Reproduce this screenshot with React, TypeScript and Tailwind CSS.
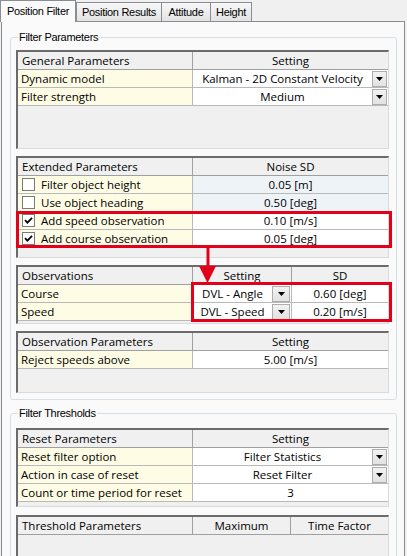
import React from 'react';

const lbl = "font-['Liberation_Sans',Arial,sans-serif] text-[11px] tracking-[-0.3px]";

function DropBtn({ wide }: { wide?: boolean }) {
  return (
    <div
      className={`mr-[1px] flex h-[16px] shrink-0 items-center justify-center border border-[#adadad] bg-gradient-to-b from-[#f2f2f2] to-[#e2e2e2] ${
        wide ? 'w-[18px]' : 'w-[15px]'
      }`}
    >
      <svg width="7" height="4" viewBox="0 0 7 4">
        <path d="M0 0h7L3.5 4z" fill="#000" />
      </svg>
    </div>
  );
}

function Check({ on }: { on: boolean }) {
  return (
    <div className="mr-[6px] ml-[1px] flex h-[13px] w-[13px] shrink-0 items-center justify-center border border-[#7a7a7a] bg-white">
      {on && (
        <svg width="9" height="9" viewBox="0 0 9 9">
          <path d="M1 4.2 3.4 6.6 8 1.8" fill="none" stroke="#000" strokeWidth="1.8" />
        </svg>
      )}
    </div>
  );
}

function Table({ className, children }: { className: string; children: React.ReactNode }) {
  return (
    <div
      className={`${className} overflow-hidden border-t-2 border-r border-b border-l-2 border-t-[#6b6b6b] border-r-[#dadada] border-b-[#dadada] border-l-[#6b6b6b] bg-[#f0f0f0]`}
    >
      {children}
    </div>
  );
}

function Head({ name, cols }: { name: string; cols: { label: string; w?: string }[] }) {
  return (
    <div className="flex h-[18px]">
      <div className="flex w-[175px] shrink-0 items-center border-r border-b border-[#a0a0a0] pl-[4px]">{name}</div>
      {cols.map((c, i) => (
        <div
          key={c.label}
          className={`flex items-center justify-center border-b border-[#a0a0a0] ${
            i < cols.length - 1 ? 'border-r' : ''
          } ${c.w ?? 'flex-1'}`}
        >
          {c.label}
        </div>
      ))}
    </div>
  );
}

function Name({ children, check }: { children: React.ReactNode; check?: boolean }) {
  return (
    <div className="flex w-[175px] shrink-0 items-center border-r border-b border-[#b9b9b9] bg-[#fefce4] pl-[3px]">
      {check !== undefined && <Check on={check} />}
      {children}
    </div>
  );
}

function Value({
  children,
  drop,
  last = true,
  w,
  bg = 'bg-white',
  wideBtn,
}: {
  children: React.ReactNode;
  drop?: boolean;
  last?: boolean;
  w?: string;
  bg?: string;
  wideBtn?: boolean;
}) {
  return (
    <div className={`flex items-center border-b border-[#b9b9b9] ${last ? '' : 'border-r'} ${w ?? 'flex-1'} ${bg}`}>
      <span className="flex-1 text-center">{children}</span>
      {drop && <DropBtn wide={wideBtn} />}
    </div>
  );
}

function Group({ title, className, children }: { title: string; className: string; children: React.ReactNode }) {
  return (
    <div className={`relative flex flex-col gap-[7px] rounded-[3px] border border-[#d5dfe5] pr-[7px] pb-[6px] pl-[5px] ${className}`}>
      <span className={`absolute -top-[8px] left-[7px] bg-[#fafafa] px-[1px] leading-[14px] ${lbl}`}>{title}</span>
      {children}
    </div>
  );
}

export default function App() {
  return (
    <div className="relative h-[556px] w-[407px] overflow-hidden bg-[#f0f0f0] font-['Open_Sans',sans-serif] text-[11.5px] leading-none text-black">
      <div className={`flex h-[22px] items-start ${lbl}`}>
        <div className="relative z-10 flex h-[22px] w-[76px] justify-center border border-b-0 border-[#898c95] bg-[#fafafa] pt-[5px]">
          Position Filter
        </div>
        <div className="mt-[2px] flex h-[19px] w-[86px] justify-center border border-b-0 border-[#898c95] bg-gradient-to-b from-[#f7f7f7] to-[#e3e3e3] pt-[4px]">
          Position Results
        </div>
        <div className="mt-[2px] -ml-px flex h-[19px] w-[50px] justify-center border border-b-0 border-[#898c95] bg-gradient-to-b from-[#f7f7f7] to-[#e3e3e3] pt-[4px]">
          Attitude
        </div>
        <div className="mt-[2px] -ml-px flex h-[19px] w-[42px] justify-center border border-b-0 border-[#898c95] bg-gradient-to-b from-[#f7f7f7] to-[#e3e3e3] pt-[4px]">
          Height
        </div>
      </div>

      <div className="-mt-px ml-[1px] h-[600px] w-[404px] border border-[#898c95] bg-[#fafafa] pt-[15px] pr-[7px] pl-[8px]">
        <Group title="Filter Parameters" className="pt-[12px]">
          <Table className="h-[99px]">
            <Head name="General Parameters" cols={[{ label: 'Setting' }]} />
            <div className="flex h-[18px]">
              <Name>Dynamic model</Name>
              <Value drop>Kalman - 2D Constant Velocity</Value>
            </div>
            <div className="flex h-[18px]">
              <Name>Filter strength</Name>
              <Value drop>Medium</Value>
            </div>
          </Table>

          <Table className="h-[102px]">
            <Head name="Extended Parameters" cols={[{ label: 'Noise SD' }]} />
            <div className="flex h-[18px]">
              <Name check={false}>Filter object height</Name>
              <Value bg="bg-[#eef3f8]">0.05 [m]</Value>
            </div>
            <div className="flex h-[18px]">
              <Name check={false}>Use object heading</Name>
              <Value bg="bg-[#eef3f8]">0.50 [deg]</Value>
            </div>
            <div className="flex h-[18px]">
              <Name check>Add speed observation</Name>
              <Value>0.10 [m/s]</Value>
            </div>
            <div className="flex h-[18px]">
              <Name check>Add course observation</Name>
              <Value>0.05 [deg]</Value>
            </div>
          </Table>

          <Table className="h-[59px]">
            <Head name="Observations" cols={[{ label: 'Setting', w: 'w-[99px]' }, { label: 'SD' }]} />
            <div className="flex h-[18px]">
              <Name>Course</Name>
              <Value drop wideBtn last={false} w="w-[99px]">
                DVL - Angle
              </Value>
              <Value>0.60 [deg]</Value>
            </div>
            <div className="flex h-[18px]">
              <Name>Speed</Name>
              <Value drop wideBtn last={false} w="w-[99px]">
                DVL - Speed
              </Value>
              <Value>0.20 [m/s]</Value>
            </div>
          </Table>

          <Table className="h-[62px]">
            <Head name="Observation Parameters" cols={[{ label: 'Setting' }]} />
            <div className="flex h-[18px]">
              <Name>Reject speeds above</Name>
              <Value>5.00 [m/s]</Value>
            </div>
          </Table>
        </Group>

        <Group title="Filter Thresholds" className="mt-[13px] pt-[14px]">
          <Table className="h-[79px]">
            <Head name="Reset Parameters" cols={[{ label: 'Setting' }]} />
            <div className="flex h-[18px]">
              <Name>Reset filter option</Name>
              <Value drop>Filter Statistics</Value>
            </div>
            <div className="flex h-[18px]">
              <Name>Action in case of reset</Name>
              <Value drop>Reset Filter</Value>
            </div>
            <div className="flex h-[18px]">
              <Name>Count or time period for reset</Name>
              <Value>3</Value>
            </div>
          </Table>

          <Table className="mt-[1px] h-[110px]">
            <Head
              name="Threshold Parameters"
              cols={[{ label: 'Maximum', w: 'w-[98px]' }, { label: 'Time Factor' }]}
            />
          </Table>
        </Group>
      </div>

      {/* red annotation boxes */}
      <div className="absolute top-[211px] left-[16px] h-[37px] w-[376px] border-[3px] border-[#e2001a]" />
      <div className="absolute top-[282px] left-[191px] h-[40px] w-[201px] border-[3px] border-[#e2001a]" />
      <svg className="absolute top-[247px] left-[198px]" width="18" height="37" viewBox="0 0 18 37">
        <path d="M10 0v22" stroke="#e2001a" strokeWidth="3" />
        <path d="M1 19h17L9.5 36z" fill="#e2001a" />
      </svg>
    </div>
  );
}
